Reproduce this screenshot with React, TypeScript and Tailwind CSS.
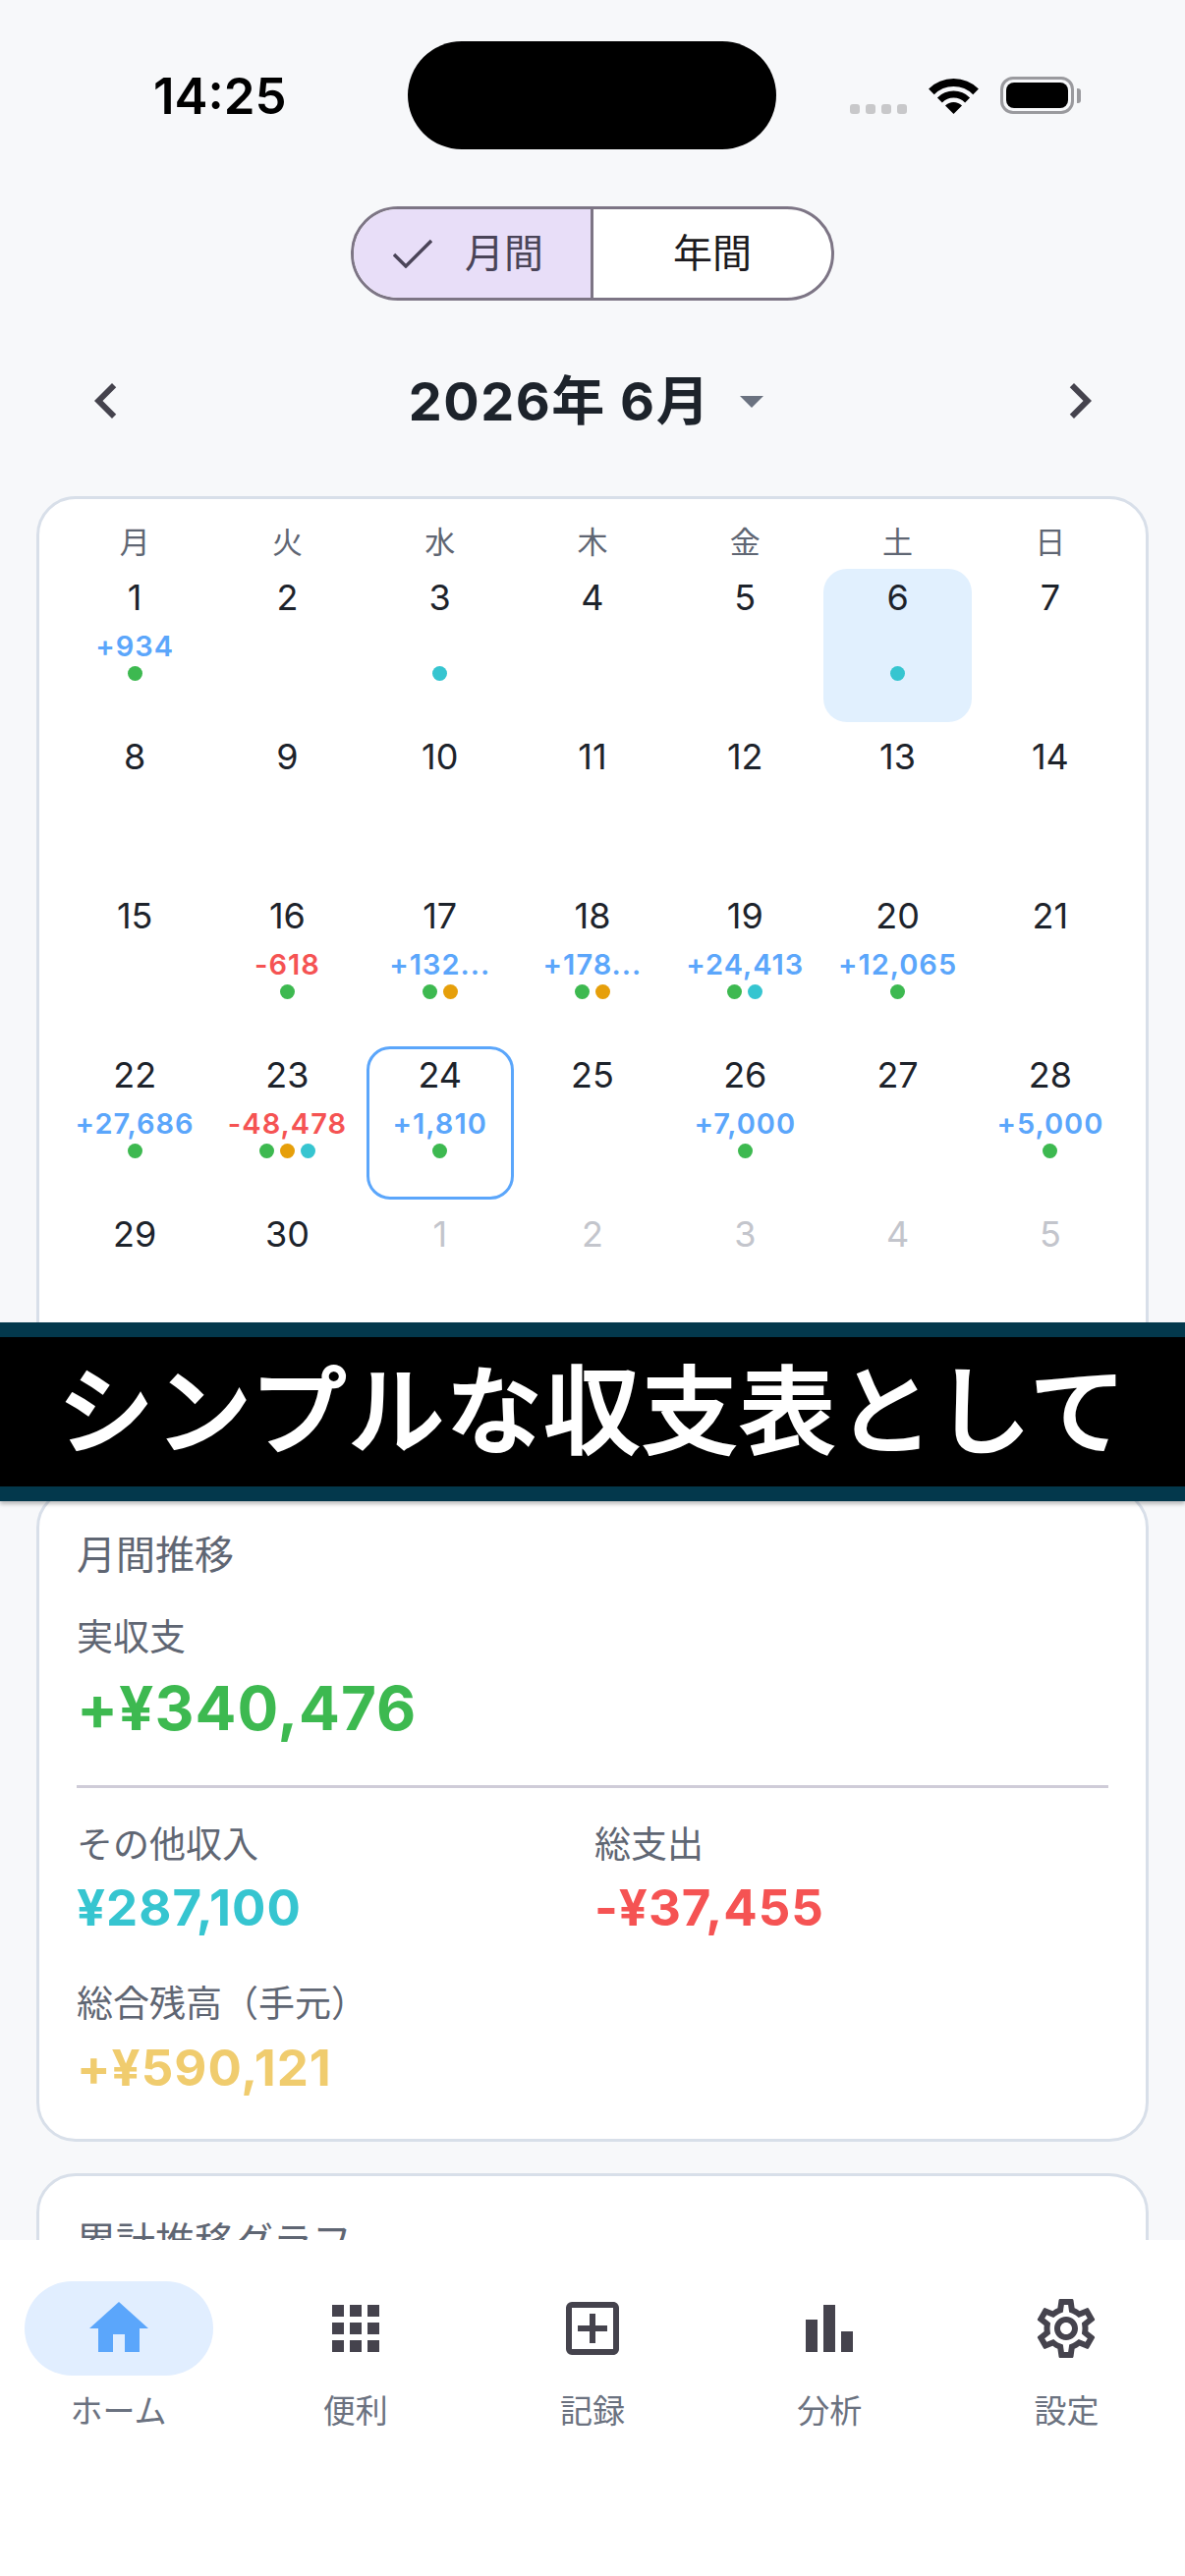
import React from 'react';
import { MdHome, MdApps, MdOutlineAddBox, MdBarChart, MdOutlineSettings, MdChevronLeft, MdChevronRight } from 'react-icons/md';

type Day = { n: number; amount?: string; kind?: 'plus' | 'minus'; dots?: string[]; muted?: boolean; selected?: boolean; today?: boolean };

const G = 'bg-[#3db950]';
const T = 'bg-[#36c5d0]';
const O = 'bg-[#e69f0a]';

const days: Day[] = [
  { n: 1, amount: '+934', kind: 'plus', dots: [G] },
  { n: 2 },
  { n: 3, dots: [T] },
  { n: 4 },
  { n: 5 },
  { n: 6, dots: [T], selected: true },
  { n: 7 },
  { n: 8 }, { n: 9 }, { n: 10 }, { n: 11 }, { n: 12 }, { n: 13 }, { n: 14 },
  { n: 15 },
  { n: 16, amount: '-618', kind: 'minus', dots: [G] },
  { n: 17, amount: '+132...', kind: 'plus', dots: [G, O] },
  { n: 18, amount: '+178...', kind: 'plus', dots: [G, O] },
  { n: 19, amount: '+24,413', kind: 'plus', dots: [G, T] },
  { n: 20, amount: '+12,065', kind: 'plus', dots: [G] },
  { n: 21 },
  { n: 22, amount: '+27,686', kind: 'plus', dots: [G] },
  { n: 23, amount: '-48,478', kind: 'minus', dots: [G, O, T] },
  { n: 24, amount: '+1,810', kind: 'plus', dots: [G], today: true },
  { n: 25 },
  { n: 26, amount: '+7,000', kind: 'plus', dots: [G] },
  { n: 27 },
  { n: 28, amount: '+5,000', kind: 'plus', dots: [G] },
  { n: 29 }, { n: 30 },
  { n: 1, muted: true }, { n: 2, muted: true }, { n: 3, muted: true }, { n: 4, muted: true }, { n: 5, muted: true },
];

const weekdays = ['月', '火', '水', '木', '金', '土', '日'];

const nav = [
  { label: 'ホーム', icon: MdHome, active: true },
  { label: '便利', icon: MdApps },
  { label: '記録', icon: MdOutlineAddBox },
  { label: '分析', icon: MdBarChart },
  { label: '設定', icon: MdOutlineSettings },
];

const StatusBar = () => (
  <div className="flex items-center pt-[42px] h-[152px] shrink-0">
    <div className="w-[415px] pl-[156px] pt-[2px] text-[51px] leading-[60px] font-semibold text-black">14:25</div>
    <div className="w-[375px] h-[110px] rounded-[55px] bg-black" />
    <div className="flex items-end pl-[75px] h-[38px]">
      <div className="flex gap-[6px]">
        {[0, 1, 2, 3].map((i) => (
          <div key={i} className="w-[10px] h-[10px] rounded-[3px] bg-[#c8c8ca]" />
        ))}
      </div>
      <svg width="51" height="37" viewBox="0 0 51 37" className="ml-[22px]">
        <path d="M2.9 14.4 A32 32 0 0 1 48.1 14.4" fill="none" stroke="#000" strokeWidth="8" />
        <path d="M11.4 22.9 A20 20 0 0 1 39.6 22.9" fill="none" stroke="#000" strokeWidth="7" />
        <path d="M25.5 37 L17 28.5 A12 12 0 0 1 34 28.5 Z" fill="#000" />
      </svg>
      <div className="ml-[22px] w-[75px] h-[38px] rounded-[13px] border-[3px] border-[#9a9a9e] p-[3px]">
        <div className="w-full h-full rounded-[8px] bg-black" />
      </div>
      <div className="ml-[3px] mb-[11px] w-[4px] h-[15px] rounded-r-[3px] bg-[#9a9a9e]" />
    </div>
  </div>
);

const Segmented = () => (
  <div className="mt-[58px] ml-[357px] w-[492px] h-[96px] shrink-0 flex rounded-[48px] border-[3px] border-[#7d7585] overflow-hidden bg-white">
    <div className="w-[244px] bg-[#e8def8] flex items-center pl-[40px] border-r-[3px] border-[#7d7585]">
      <svg width="40" height="30" viewBox="0 0 40 30" fill="none" stroke="#4a4458" strokeWidth="3.4">
        <path d="M1 16 L13 28 L39 2" />
      </svg>
      <span className="ml-[33px] text-[40px] leading-none text-[#4a4458]">月間</span>
    </div>
    <div className="flex-1 flex items-center justify-center text-[40px] leading-none text-[#1d1b20]">年間</div>
  </div>
);

const MonthHeader = () => (
  <div className="mt-[66px] h-[72px] shrink-0 flex items-center justify-between pl-[72px] pr-[71px]">
    <MdChevronLeft size={72} className="text-[#45434d]" />
    <div className="flex items-center pt-[2px] pr-[14px]">
      <span className="text-[54px] leading-none font-bold tracking-[1.5px] text-[#1d232b]">2026年 6月</span>
      <svg width="24" height="12" viewBox="0 0 24 12" className="ml-[30px]">
        <polygon points="0,0 24,0 12,12" fill="#6b7280" />
      </svg>
    </div>
    <MdChevronRight size={72} className="text-[#45434d]" />
  </div>
);

const DayCell = ({ d }: { d: Day }) => (
  <div
    className={`h-[156px] rounded-[24px] flex flex-col items-center ${d.selected ? 'bg-[#e1f0fe]' : ''} ${d.today ? 'border-[3px] border-[#5ba6fb] pt-[4px]' : 'pt-[7px]'}`}
  >
    <div className={`text-[36px] leading-[44px] ${d.muted ? 'text-[#c3c5cc]' : 'text-[#1d232b]'}`}>{d.n}</div>
    <div
      className={`mt-[11px] h-[33px] text-[29px] leading-[33px] font-semibold tracking-[1px] whitespace-nowrap ${d.kind === 'minus' ? 'text-[#f55353]' : 'text-[#5ba6fb]'}`}
    >
      {d.amount}
    </div>
    <div className="mt-[4px] h-[15px] flex gap-[6px]">
      {d.dots?.map((c, i) => (
        <div key={i} className={`w-[15px] h-[15px] rounded-full ${c}`} />
      ))}
    </div>
  </div>
);

const Calendar = () => (
  <div className="mt-[61px] mx-[37px] shrink-0 rounded-[40px] border-[3px] border-[#d8dfe9] bg-white px-[22px] pt-[22px] pb-[96px]">
    <div className="grid grid-cols-7 gap-x-[5px] h-[44px] mb-[5px]">
      {weekdays.map((w) => (
        <div key={w} className="text-center text-[31px] leading-[44px] text-[#5f6673]">{w}</div>
      ))}
    </div>
    <div className="grid grid-cols-7 gap-x-[5px] gap-y-[6px]">
      {days.map((d, i) => (
        <DayCell key={i} d={d} />
      ))}
    </div>
  </div>
);

const Monthly = () => (
  <div className="mt-[33px] mx-[37px] h-[665px] shrink-0 rounded-[40px] border-[3px] border-[#d8dfe9] bg-white px-[38px] pt-[40px]">
    <div className="text-[40px] leading-[50px] text-[#5f6673]">月間推移</div>
    <div className="mt-[37px] text-[37px] leading-[44px] text-[#5f6673]">実収支</div>
    <div className="mt-[12px] text-[62px] leading-[76px] font-bold tracking-[1px] text-[#3db950]">+¥340,476</div>
    <div className="mt-[40px] h-[3px] bg-[#cfccd8]" />
    <div className="mt-[36px] grid grid-cols-2">
      <div>
        <div className="text-[37px] leading-[44px] text-[#5f6673]">その他収入</div>
        <div className="mt-[12px] text-[51px] leading-[60px] font-bold tracking-[1px] text-[#36c5d0]">¥287,100</div>
      </div>
      <div className="pl-[2px]">
        <div className="text-[37px] leading-[44px] text-[#5f6673]">総支出</div>
        <div className="mt-[12px] text-[51px] leading-[60px] font-bold tracking-[1px] text-[#f55353]">-¥37,455</div>
      </div>
    </div>
    <div className="mt-[46px] text-[37px] leading-[44px] text-[#5f6673]">総合残高（手元）</div>
    <div className="mt-[13px] text-[51px] leading-[60px] font-bold tracking-[1px] text-[#f0cc6e]">+¥590,121</div>
  </div>
);

const GraphCard = () => (
  <div className="mt-[32px] mx-[37px] h-[400px] shrink-0 rounded-[40px] border-[3px] border-[#d8dfe9] bg-white px-[38px] pt-[42px]">
    <div className="text-[40px] leading-[50px] text-[#5f6673]">累計推移グラフ</div>
  </div>
);

const BottomNav = () => (
  <div className="h-[342px] shrink-0 bg-white flex pt-[42px]">
    {nav.map((item) => {
      const Icon = item.icon;
      return (
        <div key={item.label} className="flex-1 flex flex-col items-center">
          <div className={`w-[192px] h-[96px] rounded-[48px] flex items-center justify-center ${item.active ? 'bg-[#e1eeff]' : ''}`}>
            <Icon size={72} className={item.active ? 'text-[#5ba6fb]' : 'text-[#45434d]'} />
          </div>
          <div className="mt-[16px] text-[33px] leading-[40px] text-[#6b7280]">{item.label}</div>
        </div>
      );
    })}
  </div>
);

export default function App() {
  return (
    <div className="relative w-[1206px] h-[2622px] overflow-hidden flex flex-col bg-[#f7f8fa] font-['Inter','Noto_Sans_CJK_JP',sans-serif]">
      <div className="flex-1 min-h-0 overflow-hidden flex flex-col">
        <StatusBar />
        <Segmented />
        <MonthHeader />
        <Calendar />
        <Monthly />
        <GraphCard />
      </div>
      <BottomNav />

      {/* caption laid over the screen */}
      <div className="absolute left-0 right-0 top-[1346px] h-[182px] border-y-[15px] border-[#03384c] bg-black flex items-center justify-center shadow-[0_3px_4px_rgba(0,0,0,0.25)]">
        <span className="text-[98px] leading-none font-medium tracking-[1.5px] [-webkit-text-stroke:2px_white] text-white whitespace-nowrap">シンプルな収支表として</span>
      </div>
    </div>
  );
}
